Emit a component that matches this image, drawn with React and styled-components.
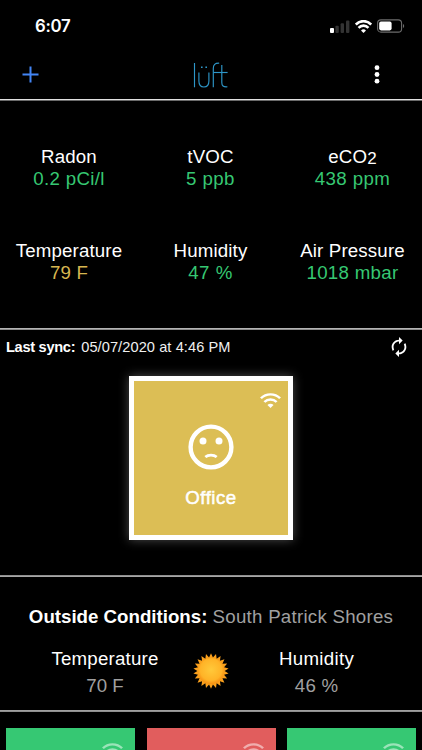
import React from "react";
import styled, { createGlobalStyle } from "styled-components";

const GlobalStyle = createGlobalStyle`
    * {
        box-sizing: border-box;
    }

    body {
        margin: 0;
        background: #000;
    }
`;

const Screen = styled.div`
    width: 422px;
    height: 750px;
    overflow: hidden;
    display: flex;
    flex-direction: column;
    background: #000;
    color: #fff;
    font-family: "Liberation Sans", Arial, sans-serif;
    font-size: 18.7px;
    line-height: 22px;
    white-space: nowrap;

    > * {
        flex-shrink: 0;
    }
`;

const StatusBar = styled.div`
    height: 50px;
    padding: 2px 17px 0 35px;
    display: flex;
    align-items: center;
    justify-content: space-between;
`;

const Clock = styled.span`
    font-family: Inter, sans-serif;
    font-weight: 600;
    font-size: 16.8px;
    letter-spacing: -0.3px;
`;

const StatusIcons = styled.div`
    display: flex;
    align-items: center;
    gap: 5px;
`;

const Header = styled.header`
    height: 50px;
    padding: 0 42px 0 22px;
    display: flex;
    align-items: center;
    justify-content: space-between;
    border-bottom: 1px solid #e0e0e0;
    box-shadow: 0 1px 0 #6a6a6a;
`;

const Readings = styled.section`
    height: 229px;
    padding: 46px 0 0 0;
    display: grid;
    grid-template-columns: 138px 145px 139px;
    grid-auto-rows: 94px;
    border-bottom: 1px solid #b4b4b4;
    box-shadow: 0 1px 0 #8a8a8a;
`;

const Reading = styled.div`
    display: flex;
    flex-direction: column;
    align-items: center;
`;

const Label = styled.span`
    height: 22px;
    letter-spacing: ${(props) => props.$tracking || 0}px;
`;

const Value = styled.span`
    color: ${(props) => props.$color};
    letter-spacing: ${(props) => props.$tracking || 0}px;
`;

const Sub = styled.sub`
    font-size: 17px;
    line-height: 0;
    vertical-align: -1px;
`;

const SyncBar = styled.div`
    height: 36px;
    padding: 0 12px 0 6px;
    display: flex;
    align-items: center;
    justify-content: space-between;
    font-size: 14.6px;
`;

const SyncTime = styled.span`
    margin-left: 6px;
    color: #f0f0f0;
    letter-spacing: 0.08px;
`;

const SyncLabel = styled.b`
    letter-spacing: -0.3px;
`;

const DeviceArea = styled.section`
    height: 211px;
    padding-top: 11px;
    display: flex;
    justify-content: center;
    align-items: flex-start;
    border-bottom: 1px solid #8f8f8f;
    box-shadow: 0 1px 0 #a6a6a6;
`;

const SelectedTile = styled.div`
    width: 164px;
    height: 164px;
    border: 5px solid #fff;
    background: #dcbe55;
    box-shadow: 0 0 10px rgba(255, 255, 255, 0.3);
    display: flex;
    flex-direction: column;
    align-items: center;
`;

const TileCorner = styled.div`
    align-self: flex-end;
    height: 43px;
    padding: 10px 7px 0 0;
`;

const TileName = styled.span`
    margin-top: 17px;
    font-size: 18.7px;
    letter-spacing: 0.5px;
    -webkit-text-stroke: 0.5px #fff;
`;

const Outside = styled.section`
    height: 135px;
    padding-top: 30px;
    border-bottom: 1px solid #a0a0a0;
    box-shadow: 0 1px 0 #8f8f8f;
`;

const OutsideTitle = styled.div`
    text-align: center;
    font-size: 18.7px;
`;

const Place = styled.span`
    color: #a0a0a0;
    letter-spacing: 0.25px;
`;

const OutsideRow = styled.div`
    margin-top: 20px;
    display: grid;
    grid-template-columns: 105px 106px 106px;
    justify-content: center;
`;

const OutsideReading = styled.div`
    display: flex;
    flex-direction: column;
    align-items: center;
    gap: 5px;
`;

const SunSlot = styled.div`
    display: flex;
    justify-content: center;
    padding-top: 5px;
`;

const LogoSlot = styled.div`
    display: flex;
    margin-left: 9px;
`;

const DeviceRow = styled.div`
    padding: 17px 6px 0;
    display: grid;
    grid-template-columns: repeat(3, 129px);
    justify-content: space-between;
`;

const DeviceTile = styled.div`
    height: 129px;
    padding: 15px 12px 0 0;
    display: flex;
    justify-content: flex-end;
    align-items: flex-start;
    background: ${(props) => props.$color};
`;

const GREEN = "#36c873";
const YELLOW = "#d6b650";
const RED = "#e15d5d";

const Wifi = ({ width = 21, height = 15, color = "#fff", stroke = 2.4 }) => (
    <svg width={width} height={height} viewBox="0 0 20 15" preserveAspectRatio="none" fill="none" stroke={color}>
        <path d="M0.9 5.3C5.8 0 14.2 0 19.1 5.3" strokeWidth={stroke} />
        <path d="M4.2 9C7.3 5.6 12.7 5.6 15.8 9" strokeWidth={stroke} />
        <path d="M7.1 12C8.7 10.4 11.3 10.4 12.9 12L10 14.9Z" fill={color} stroke="none" />
    </svg>
);

const Signal = () => (
    <svg width="20" height="13" viewBox="0 0 20 13">
        <rect x="0" y="8" width="4" height="5" rx="1" fill="#fff" />
        <rect x="5.4" y="5.8" width="3.4" height="7.2" rx="1" fill="#333" />
        <rect x="10.6" y="3.2" width="3.4" height="9.8" rx="1" fill="#333" />
        <rect x="16" y="0.6" width="3.4" height="12.4" rx="1" fill="#333" />
    </svg>
);

const Battery = () => (
    <svg width="28" height="14" viewBox="0 0 28 14">
        <rect x="0.6" y="0.9" width="24" height="12.2" rx="3.4" fill="none" stroke="#6c6c6c" strokeWidth="1.1" />
        <rect x="2.2" y="2.6" width="12.4" height="8.8" rx="1.8" fill="#fff" />
        <path d="M26 5C27.6 5.6 27.6 8.4 26 9Z" fill="#6c6c6c" />
    </svg>
);

const Plus = () => (
    <svg width="17" height="17" viewBox="0 0 17 17" stroke="#4385f5" strokeWidth="2">
        <path d="M8.5 0.5V16.5M0.5 8.5H16.5" />
    </svg>
);

const Logo = () => (
    <svg width="36" height="26" viewBox="0 0 36 26" fill="none" stroke="#2d96c8" strokeWidth="1.15">
        <path d="M1.5 1V25.3" />
        <path d="M5.9 10.5V19C5.9 23 7.8 25 10.9 25S15.9 23 15.9 19V10.5" />
        <path d="M8 5.2H9.6M12.4 5.2H14" strokeWidth="1.6" />
        <path d="M20.3 25.3V6.5C20.3 2.8 22 1 26.2 1.2" />
        <path d="M20.3 10.5H34.6" />
        <path d="M28.8 3V20.5C28.8 23.8 30.2 25.2 34.4 24.8" />
    </svg>
);

const Dots = () => (
    <svg width="6" height="19" viewBox="0 0 6 19" fill="#fff">
        <circle cx="3" cy="2.7" r="2.4" />
        <circle cx="3" cy="9.5" r="2.4" />
        <circle cx="3" cy="16.2" r="2.4" />
    </svg>
);

const Sync = () => (
    <svg width="22" height="22" viewBox="0 0 24 24" fill="#fff">
        <path d="M12 6v3l4-4-4-4v3c-4.42 0-8 3.58-8 8 0 1.57.46 3.03 1.24 4.26L6.7 14.8c-.45-.83-.7-1.79-.7-2.8 0-3.31 2.69-6 6-6zm6.76 1.74L17.3 9.2c.44.84.7 1.79.7 2.8 0 3.31-2.69 6-6 6v-3l-4 4 4 4v-3c4.42 0 8-3.58 8-8 0-1.57-.46-3.03-1.24-4.26z" />
    </svg>
);

const SadFace = () => (
    <svg width="46" height="46" viewBox="0 0 46 46" fill="none" stroke="#fff">
        <circle cx="23" cy="23" r="20.4" strokeWidth="4.4" />
        <circle cx="15" cy="17" r="3.5" fill="#fff" stroke="none" />
        <circle cx="31" cy="17" r="3.5" fill="#fff" stroke="none" />
        <path d="M17.3 33C20.3 30.5 25.7 30.5 28.7 33" strokeWidth="2.8" />
    </svg>
);

const sunPoints = Array.from({ length: 44 }, (_, i) => {
    const radius = i % 2 ? 13.6 : 17.8;
    const angle = (i * Math.PI) / 22;
    return `${(18 + radius * Math.sin(angle)).toFixed(2)},${(18 - radius * Math.cos(angle)).toFixed(2)}`;
}).join(" ");

const Sun = () => (
    <svg width="36" height="36" viewBox="0 0 36 36">
        <defs>
            <radialGradient id="sunBody" cx="0.5" cy="0.45" r="0.55">
                <stop offset="0" stopColor="#ffc93a" />
                <stop offset="0.75" stopColor="#ffb327" />
                <stop offset="1" stopColor="#f68f12" />
            </radialGradient>
        </defs>
        <polygon points={sunPoints} fill="#f99f1c" />
        <circle cx="18" cy="18" r="13" fill="url(#sunBody)" />
    </svg>
);

const readings = [
    { label: "Radon", value: "0.2 pCi/l", color: GREEN, tracking: 0.35 },
    { label: "tVOC", value: "5 ppb", color: GREEN, tracking: 0.4 },
    { label: <>eCO<Sub>2</Sub></>, value: "438 ppm", color: GREEN, tracking: 0.4 },
    { label: "Temperature", value: "79 F", color: YELLOW, tracking: 0.2 },
    { label: "Humidity", value: "47 %", color: GREEN, tracking: 0.5 },
    { label: "Air Pressure", value: "1018 mbar", color: GREEN, tracking: 0.3 },
];

export default function App() {
    return (
        <Screen>
            <GlobalStyle />
            <StatusBar>
                <Clock>6:07</Clock>
                <StatusIcons>
                    <Signal />
                    <Wifi width={17} height={13} stroke={3} />
                    <Battery />
                </StatusIcons>
            </StatusBar>
            <Header>
                <Plus />
                <LogoSlot>
                    <Logo />
                </LogoSlot>
                <Dots />
            </Header>
            <Readings>
                {readings.map((item) => (
                    <Reading key={item.value}>
                        <Label $tracking={0.15}>{item.label}</Label>
                        <Value $color={item.color} $tracking={item.tracking}>{item.value}</Value>
                    </Reading>
                ))}
            </Readings>
            <SyncBar>
                <span>
                    <SyncLabel>Last sync:</SyncLabel>
                    <SyncTime>05/07/2020 at 4:46 PM</SyncTime>
                </span>
                <Sync />
            </SyncBar>
            <DeviceArea>
                <SelectedTile>
                    <TileCorner>
                        <Wifi />
                    </TileCorner>
                    <SadFace />
                    <TileName>Office</TileName>
                </SelectedTile>
            </DeviceArea>
            <Outside>
                <OutsideTitle>
                    <b>Outside Conditions:</b> <Place>South Patrick Shores</Place>
                </OutsideTitle>
                <OutsideRow>
                    <OutsideReading>
                        <Label $tracking={0.2}>Temperature</Label>
                        <Value $color="#a0a0a0">70 F</Value>
                    </OutsideReading>
                    <SunSlot>
                        <Sun />
                    </SunSlot>
                    <OutsideReading>
                        <Label $tracking={0.3}>Humidity</Label>
                        <Value $color="#a0a0a0" $tracking={0.2}>46 %</Value>
                    </OutsideReading>
                </OutsideRow>
            </Outside>
            <DeviceRow>
                {[GREEN, RED, GREEN].map((color, i) => (
                    <DeviceTile key={i} $color={color}>
                        <Wifi color="rgba(255, 255, 255, 0.5)" />
                    </DeviceTile>
                ))}
            </DeviceRow>
        </Screen>
    );
}
